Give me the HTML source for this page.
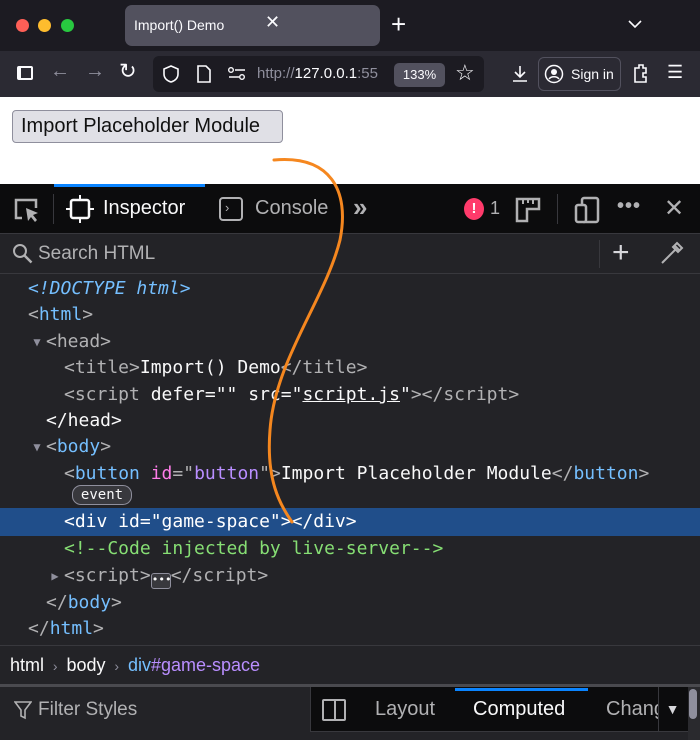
<!DOCTYPE html>
<html><head><style>
*{box-sizing:border-box;margin:0;padding:0}
body{width:700px;height:740px;overflow:hidden;background:#fff;font-family:"Liberation Sans",sans-serif;position:relative}
.abs{position:absolute}
.mono{font-family:"DejaVu Sans Mono",monospace;font-size:18px;white-space:pre}
.ln{position:absolute;left:0;width:700px;height:26px;line-height:26px}
.g{color:#b1b1b3}.b{color:#75bfff}.w{color:#f9f9fa}.p{color:#b98eff}.pk{color:#ff7de9}.gr{color:#86de74}
.tri{display:inline-block;width:18px;font-size:12px;color:#8f8f9d;text-align:center;vertical-align:1px}
</style></head><body>
<div class="abs" style="left:0;top:0;width:700px;height:51px;background:#1c1b22"></div>
<div class="abs" style="left:16px;top:19px;width:13px;height:13px;border-radius:50%;background:#fe5f57"></div>
<div class="abs" style="left:38px;top:19px;width:13px;height:13px;border-radius:50%;background:#febc2e"></div>
<div class="abs" style="left:61px;top:19px;width:13px;height:13px;border-radius:50%;background:#28c840"></div>
<div class="abs" style="left:125px;top:5px;width:255px;height:41px;border-radius:7px;background:#52515e"></div>
<div class="abs" style="left:134px;top:17px;color:#fbfbfe;font-size:14px">Import() Demo</div>
<div class="abs" style="left:265px;top:12px;color:#fbfbfe;font-size:18px">✕</div>
<div class="abs" style="left:391px;top:9px;color:#fbfbfe;font-size:26px;font-weight:300">+</div>
<svg class="abs" style="left:627px;top:18px" width="16" height="12"><path d="M2 3l6 6 6-6" stroke="#fbfbfe" stroke-width="1.6" fill="none"/></svg>
<div class="abs" style="left:0;top:51px;width:700px;height:46px;background:#2b2a33"></div>
<div class="abs" style="left:17px;top:66px;width:16px;height:14px;border:2px solid #fbfbfe;border-left-width:4px;border-radius:2px"></div>
<div class="abs" style="left:50px;top:60px;color:#8f8f9d;font-size:20px">←</div>
<div class="abs" style="left:85px;top:60px;color:#8f8f9d;font-size:20px">→</div>
<div class="abs" style="left:119px;top:59px;color:#fbfbfe;font-size:21px">↻</div>
<div class="abs" style="left:153px;top:56px;width:331px;height:36px;border-radius:6px;background:#1c1b22"></div>
<svg class="abs" style="left:162px;top:64px" width="18" height="20"><path d="M9 2l7 3v5c0 4-3 7-7 8-4-1-7-4-7-8V5z" stroke="#fbfbfe" stroke-width="1.6" fill="none"/></svg>
<svg class="abs" style="left:196px;top:64px" width="16" height="20"><path d="M2 2h8l4 4v12H2z" stroke="#fbfbfe" stroke-width="1.6" fill="none"/></svg>
<svg class="abs" style="left:227px;top:66px" width="20" height="16"><path d="M8 4h10M2 11h10" stroke="#fbfbfe" stroke-width="1.6"/><circle cx="4" cy="4" r="2.3" stroke="#fbfbfe" fill="none" stroke-width="1.4"/><circle cx="15" cy="11" r="2.3" stroke="#fbfbfe" fill="none" stroke-width="1.4"/></svg>
<div class="abs" style="left:257px;top:65px;font-size:15px;color:#8f8f9d;white-space:nowrap">http://<span style="color:#fbfbfe">127.0.0.1</span>:55</div>
<div class="abs" style="left:394px;top:63px;width:51px;height:24px;border-radius:5px;background:#52515e;color:#fbfbfe;font-size:13px;text-align:center;line-height:24px">133%</div>
<div class="abs" style="left:455px;top:60px;color:#fbfbfe;font-size:22px">☆</div>
<svg class="abs" style="left:510px;top:64px" width="20" height="20"><path d="M10 2v11M5 8l5 5 5-5M3 17h14" stroke="#fbfbfe" stroke-width="1.6" fill="none"/></svg>
<div class="abs" style="left:538px;top:57px;width:83px;height:34px;border:1px solid #52515e;border-radius:6px"></div>
<svg class="abs" style="left:544px;top:64px" width="20" height="20"><circle cx="10" cy="10" r="8.5" stroke="#fbfbfe" stroke-width="1.5" fill="none"/><circle cx="10" cy="8" r="3" fill="#fbfbfe"/><path d="M5 15c2-3 8-3 10 0" stroke="#fbfbfe" stroke-width="1.5" fill="none"/></svg>
<div class="abs" style="left:571px;top:66px;color:#fbfbfe;font-size:14px">Sign in</div>
<svg class="abs" style="left:631px;top:62px" width="20" height="22"><path d="M4 6h4V3h4v3h3v5h-3v4h3v5H4z" stroke="#fbfbfe" stroke-width="1.6" fill="none"/></svg>
<div class="abs" style="left:667px;top:62px;color:#fbfbfe;font-size:18px">☰</div>
<div class="abs" style="left:12px;top:110px;width:271px;height:33px;border:1px solid #8f8f9d;border-radius:4px;background:#e0e0e6;font-size:20px;line-height:31px;padding-left:8px;color:#111">Import Placeholder Module</div>
<div class="abs" style="left:0;top:184px;width:700px;height:50px;background:#0c0c0d;border-bottom:1px solid #38383d"></div>
<div class="abs" style="left:54px;top:184px;width:151px;height:3px;background:#0a84ff"></div>
<svg class="abs" style="left:12px;top:196px" width="30" height="28"><path d="M10 22H4V4h20v8" stroke="#b1b1b3" stroke-width="2.5" fill="none"/><path d="M14 12l12 5-5 2 4 5-2 2-4-5-3 4z" fill="#b1b1b3"/></svg>
<div class="abs" style="left:53px;top:194px;width:1px;height:30px;background:#38383d"></div>
<svg class="abs" style="left:66px;top:194px" width="28" height="30"><rect x="5" y="6" width="18" height="18" rx="2" stroke="#f9f9fa" stroke-width="2.5" fill="none"/><path d="M14 1v5M14 24v5M0 15h5M23 15h5" stroke="#f9f9fa" stroke-width="2"/></svg>
<div class="abs" style="left:103px;top:197px;color:#f9f9fa;font-size:20px">Inspector</div>
<div class="abs" style="left:219px;top:197px;width:24px;height:24px;border:2.5px solid #b1b1b3;border-radius:4px;color:#b1b1b3;font-size:13px;line-height:18px;padding-left:4px">›</div>
<div class="abs" style="left:255px;top:197px;color:#b1b1b3;font-size:20px">Console</div>
<div class="abs" style="left:353px;top:192px;color:#b1b1b3;font-size:26px;font-weight:bold">»</div>
<div class="abs" style="left:464px;top:198px;width:20px;height:22px;border-radius:50%;background:#ff3b6b;color:#fff;font-weight:bold;font-size:15px;text-align:center;line-height:22px">!</div>
<div class="abs" style="left:490px;top:198px;color:#b1b1b3;font-size:18px">1</div>
<svg class="abs" style="left:514px;top:196px" width="28" height="28"><path d="M3 3h22v10H13v12H3z" stroke="#b1b1b3" stroke-width="2.5" fill="none"/><path d="M9 3v5M14 3v4M19 3v5" stroke="#b1b1b3" stroke-width="2"/></svg>
<div class="abs" style="left:557px;top:194px;width:1px;height:30px;background:#38383d"></div>
<svg class="abs" style="left:574px;top:196px" width="28" height="28"><rect x="8" y="2" width="16" height="24" rx="2" stroke="#b1b1b3" stroke-width="2.5" fill="none"/><rect x="2" y="9" width="10" height="17" rx="2" stroke="#b1b1b3" stroke-width="2.5" fill="#0c0c0d"/></svg>
<div class="abs" style="left:617px;top:195px;color:#b1b1b3;font-size:20px;letter-spacing:1px;font-weight:bold">•••</div>
<div class="abs" style="left:664px;top:194px;color:#b1b1b3;font-size:24px">✕</div>
<div class="abs" style="left:0;top:234px;width:700px;height:40px;background:#232327;border-bottom:1px solid #38383d"></div>
<svg class="abs" style="left:12px;top:243px" width="22" height="22"><circle cx="8" cy="8" r="6" stroke="#b1b1b3" stroke-width="2" fill="none"/><path d="M12.5 12.5l7 7" stroke="#b1b1b3" stroke-width="2.5"/></svg>
<div class="abs" style="left:38px;top:243px;color:#b1b1b3;font-size:19px">Search HTML</div>
<div class="abs" style="left:599px;top:240px;width:1px;height:28px;background:#38383d"></div>
<div class="abs" style="left:612px;top:236px;color:#d7d7db;font-size:30px;font-weight:300">+</div>
<svg class="abs" style="left:658px;top:241px" width="26" height="26"><path d="M4 22l2-2 11-11M16 4l6 6M19 2l5 5-4 4-5-5z" stroke="#b1b1b3" stroke-width="2" fill="none"/></svg>
<div class="abs" style="left:0;top:274px;width:700px;height:372px;background:#232327"></div>
<div class="abs" style="left:0;top:508px;width:700px;height:28px;background:#204e8a"></div>
<div class="mono">
<div class="ln" style="top:276px;left:28px"><i class="b">&lt;!DOCTYPE html&gt;</i></div>
<div class="ln" style="top:302px;left:28px"><span class="g">&lt;</span><span class="b">html</span><span class="g">&gt;</span></div>
<div class="ln" style="top:329px;left:28px"><span class="tri">▼</span><span class="g">&lt;head&gt;</span></div>
<div class="ln" style="top:355px;left:64px"><span class="g">&lt;title&gt;</span><span class="w">Import() Demo</span><span class="g">&lt;/title&gt;</span></div>
<div class="ln" style="top:382px;left:64px"><span class="g">&lt;script </span><span class="w">defer=""</span> <span class="w">src="<u>script.js</u>"</span><span class="g">&gt;&lt;/script&gt;</span></div>
<div class="ln" style="top:408px;left:46px"><span class="w">&lt;/head&gt;</span></div>
<div class="ln" style="top:434px;left:28px"><span class="tri">▼</span><span class="g">&lt;</span><span class="b">body</span><span class="g">&gt;</span></div>
<div class="ln" style="top:461px;left:64px"><span class="g">&lt;</span><span class="b">button</span> <span class="pk">id</span><span class="g">="</span><span class="p">button</span><span class="g">"&gt;</span><span class="w">Import Placeholder Module</span><span class="g">&lt;/</span><span class="b">button</span><span class="g">&gt;</span></div>
<div class="abs" style="left:72px;top:485px;width:60px;height:20px;border:1px solid #8f8f9d;border-radius:9px;background:#38383d;color:#f9f9fa;font-family:'DejaVu Sans Mono',monospace;font-size:14px;line-height:18px;text-align:center">event</div>
<div class="ln" style="top:509px;left:64px"><span style="color:#fff">&lt;div id="game-space"&gt;&lt;/div&gt;</span></div>
<div class="ln" style="top:536px;left:64px"><span class="gr">&lt;!--Code injected by live-server--&gt;</span></div>
<div class="ln" style="top:563px;left:46px"><span class="tri">▶</span><span class="g">&lt;script&gt;</span><span style="display:inline-block;width:20px;height:16px;border:1px solid #8f8f9d;border-radius:3px;background:#38383d;color:#f9f9fa;font-size:11px;line-height:12px;text-align:center;vertical-align:-2px">•••</span><span class="g">&lt;/script&gt;</span></div>
<div class="ln" style="top:590px;left:46px"><span class="g">&lt;/</span><span class="b">body</span><span class="g">&gt;</span></div>
<div class="ln" style="top:616px;left:28px"><span class="g">&lt;/</span><span class="b">html</span><span class="g">&gt;</span></div>
</div>
<div class="abs" style="left:0;top:645px;width:700px;height:42px;background:#232327;border-top:1px solid #38383d;border-bottom:3px solid #4a4a4f"></div>
<div class="abs" style="left:10px;top:655px;font-size:18px;color:#f9f9fa;white-space:nowrap">html <span style="color:#8f8f9d;font-size:14px">&nbsp;›&nbsp;</span> body <span style="color:#8f8f9d;font-size:14px">&nbsp;›&nbsp;</span> <span class="b">div</span><span class="p">#game-space</span></div>
<div class="abs" style="left:0;top:687px;width:310px;height:53px;background:#232327"></div>
<svg class="abs" style="left:14px;top:700px" width="18" height="20"><path d="M1 2h16l-6 8v8l-4-2v-6z" stroke="#b1b1b3" stroke-width="1.6" fill="none"/></svg>
<div class="abs" style="left:38px;top:699px;color:#b1b1b3;font-size:19px">Filter Styles</div>
<div class="abs" style="left:310px;top:687px;width:380px;height:53px;background:#0c0c0d;border-left:1px solid #38383d"></div>
<div class="abs" style="left:455px;top:688px;width:133px;height:3px;background:#0a84ff"></div>
<div class="abs" style="left:322px;top:699px;width:24px;height:22px;border:2px solid #b1b1b3;border-radius:2px"></div>
<div class="abs" style="left:334px;top:699px;width:2px;height:22px;background:#b1b1b3"></div>
<div class="abs" style="left:375px;top:698px;color:#b1b1b3;font-size:20px">Layout</div>
<div class="abs" style="left:473px;top:698px;color:#f9f9fa;font-size:20px">Computed</div>
<div class="abs" style="left:606px;top:698px;color:#b1b1b3;font-size:20px;width:52px;overflow:hidden;white-space:nowrap">Changes</div>
<div class="abs" style="left:658px;top:687px;width:28px;height:44px;border-left:1px solid #38383d;color:#d7d7db;font-size:14px;text-align:center;line-height:44px">▼</div>
<div class="abs" style="left:310px;top:731px;width:380px;height:9px;background:#232327;border-top:1px solid #38383d"></div>
<div class="abs" style="left:688px;top:687px;width:12px;height:53px;background:#2a2a2e"></div>
<div class="abs" style="left:689px;top:689px;width:8px;height:30px;border-radius:4px;background:#8f8f9d"></div>
<svg class="abs" style="left:0;top:0" width="700" height="740"><path d="M274 160C330 155 350 190 340 240C325 300 275 360 270 430C266 480 280 505 292 522" stroke="#f5871f" stroke-width="3" fill="none" stroke-linecap="round"/></svg>
</body></html>
